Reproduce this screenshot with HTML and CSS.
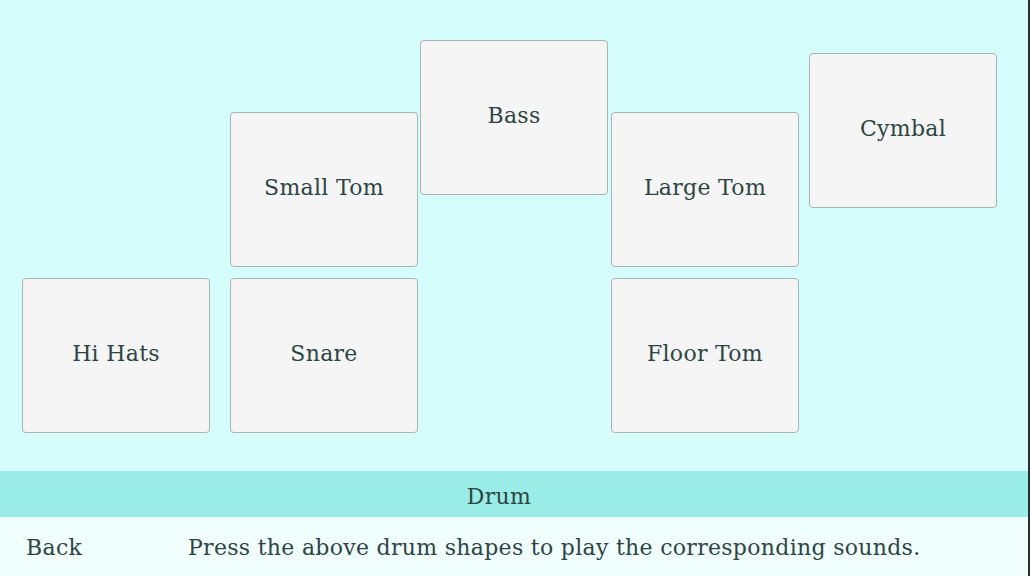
FILE: index.html
```html
<!DOCTYPE html>
<html lang="en">
<head>
    <meta charset="UTF-8">
    <meta name="viewport" content="width=device-width, initial-scale=1.0">
    <title>Drum</title>
    <link rel="stylesheet" href="styles.css">
</head>
<body>

    <div class="page">
        <div class="stage">
            <div class="pad hihats">Hi Hats</div>
            <div class="pad snare">Snare</div>
            <div class="pad smalltom">Small Tom</div>
            <div class="pad bass">Bass</div>
            <div class="pad largetom">Large Tom</div>
            <div class="pad floortom">Floor Tom</div>
            <div class="pad cymbal">Cymbal</div>
        </div>

        <div class="title-bar">Drum</div>

        <div class="footer">
            <span class="back">Back</span>
            <span class="hint">Press the above drum shapes to play the corresponding sounds.</span>
        </div>
    </div>

</body>
</html>
```

FILE: styles.css
```css
html, body {
    margin: 0;
    height: 100%;
}
body {
    font-family: "DejaVu Serif", serif;
    font-size: 22px;
    letter-spacing: 0.3px;
    color: #2d4545;
    background: #2a2f2f;
}
.page {
    width: 1028px;
    height: 576px;
    display: flex;
    flex-direction: column;
    background: #d5fdfb;
}
.stage {
    position: relative;
    flex: 1;
}
.pad {
    position: absolute;
    box-sizing: border-box;
    width: 188px;
    height: 155px;
    display: flex;
    align-items: center;
    justify-content: center;
    padding-bottom: 4px;
    background: #f5f5f5;
    border: 1px solid #a9b4b3;
    border-radius: 4px;
}
.hihats   { left: 22px;  top: 278px; }
.snare    { left: 230px; top: 278px; }
.smalltom { left: 230px; top: 112px; }
.bass     { left: 420px; top: 40px; }
.largetom { left: 611px; top: 112px; }
.floortom { left: 611px; top: 278px; }
.cymbal   { left: 809px; top: 53px; }

.title-bar {
    box-sizing: border-box;
    height: 46px;
    display: flex;
    align-items: center;
    justify-content: center;
    padding: 4px 30px 0 0;
    background: #9aede6;
}
.footer {
    box-sizing: border-box;
    height: 59px;
    display: flex;
    align-items: center;
    padding-top: 2px;
    background: #f1fefe;
}
.back {
    width: 162px;
    padding-left: 26px;
}
```
